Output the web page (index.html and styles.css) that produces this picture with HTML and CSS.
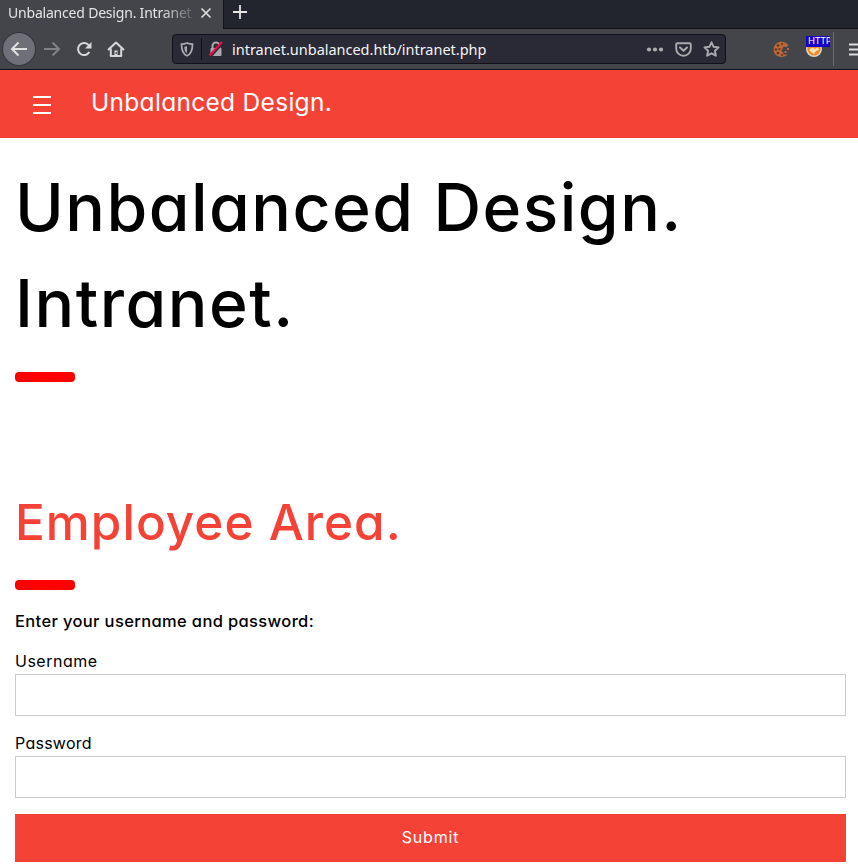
FILE: index.html
```html
<!DOCTYPE html>
<html lang="en">
<head>
<meta charset="utf-8">
<title>Unbalanced Design. Intranet</title>
<link rel="stylesheet" href="styles.css">
</head>
<body>
<div class="browser">
  <div class="tabs">
    <div class="tab">
      <span class="tab-title">Unbalanced Design. Intranet</span>
      <svg class="tab-close" width="12" height="12" viewBox="0 0 12 12"><path d="M1.5 1.5l9 9M10.5 1.5l-9 9" stroke="#dcdcdc" stroke-width="1.7"/></svg>
    </div>
    <div class="new-tab"><svg width="14" height="14" viewBox="0 0 14 14"><path d="M7 0v14M0 7h14" stroke="#e6e6e6" stroke-width="1.8"/></svg></div>
  </div>
  <div class="toolbar">
    <div class="back"><svg width="18" height="16" viewBox="0 0 18 16"><path d="M17 8H2M8.5 1.5L2 8l6.500 6.500" fill="none" stroke="#e0e0e0" stroke-width="2"/></svg></div>
    <svg class="forward" width="18" height="16" viewBox="0 0 18 16"><path d="M1 8h15M9.500 1.500L16 8l-6.500 6.500" fill="none" stroke="#818287" stroke-width="2"/></svg>
    <svg class="reload" width="16" height="16" viewBox="0 0 16 16"><path d="M13.300 11A6 6 0 1 1 12.300 3.800L14 5.500" fill="none" stroke="#d8d8da" stroke-width="2"/><path d="M15.500 1v6.500H9z" fill="#d8d8da"/></svg>
    <svg class="home" width="18" height="17" viewBox="0 0 18 17"><path d="M1 9l8-7.500L17 9M3.800 7.500V15h10.400V7.500" fill="none" stroke="#d8d8da" stroke-width="2" stroke-linejoin="round"/><path d="M7.400 15V9.500h3.200V15" fill="#d8d8da"/><path d="M8.500 11h1.300v2H8.500z" fill="#43454b"/></svg>
    <div class="urlbar">
      <svg class="shield" width="14" height="15" viewBox="0 0 14 15"><path d="M7 1C5 2 3 2.200 1.500 2.200c0 5.500.7 9.500 5.500 11.600 4.800-2.100 5.500-6.100 5.500-11.600C11 2.200 9 2 7 1z" fill="none" stroke="#a9aab0" stroke-width="1.800"/><path d="M7 4c-.9.500-1.900.6-2.700.7.100 3 .6 5.200 2.700 6.500z" fill="#a9aab0"/></svg>
      <i class="divider"></i>
      <svg class="lock" width="16" height="16" viewBox="0 0 16 16"><path d="M4.500 8V5a3.500 3.500 0 0 1 7 0v3" fill="none" stroke="#a9aab0" stroke-width="2"/><rect x="2.500" y="7" width="11" height="8" rx="1" fill="#a9aab0"/><path d="M2.500 15.500L14.800 2" stroke="#292a36" stroke-width="2.500"/><path d="M1.500 14.500L14 1" stroke="#f50c49" stroke-width="2"/></svg>
      <span class="url">intranet.unbalanced.htb/intranet.php</span>
      <svg class="dots" width="18" height="5" viewBox="0 0 18 5"><g fill="#aaabaf"><circle cx="3" cy="2.500" r="2.100"/><circle cx="9" cy="2.500" r="2.100"/><circle cx="15" cy="2.500" r="2.100"/></g></svg>
      <svg class="pocket" width="17" height="15" viewBox="0 0 17 15"><path d="M2.500 1.200h12q1.300 0 1.300 1.300v4a7.300 7.300 0 0 1-14.600 0v-4q0-1.300 1.300-1.300z" fill="none" stroke="#aaabaf" stroke-width="1.900"/><path d="M5 5.500l3.500 3.300L12 5.500" fill="none" stroke="#aaabaf" stroke-width="2" stroke-linecap="round" stroke-linejoin="round"/></svg>
      <svg class="star" width="17" height="16" viewBox="0 0 17 16"><path d="M8.500 1.300l2.100 4.500 5 .6-3.700 3.400 1 4.900-4.400-2.400-4.400 2.400 1-4.900L1.400 6.400l5-.6z" fill="none" stroke="#aaabaf" stroke-width="1.900" stroke-linejoin="round"/></svg>
    </div>
    <svg class="cookie" width="17" height="17" viewBox="0 0 17 17"><path d="M15.500 4.500C13 0 7 0 4 2 0 5-.5 10 2.500 13.500 5.500 17 12 16.500 14.500 13.500l-4 0-.5-2.500-2-1 1.500-2 1-2.500 3 .500z" fill="#b9693c"/><g fill="#633019"><circle cx="5" cy="4.500" r="1.200"/><circle cx="9" cy="3" r="1"/><circle cx="3" cy="8.500" r="1.200"/><circle cx="6.500" cy="8" r="1.100"/><circle cx="5" cy="12" r="1.300"/><circle cx="9" cy="14" r="1"/></g><path d="M14 7h2v2h-2zM11.500 10h2v2h-2z" fill="#b9693c"/></svg>
    <div class="proxy">
      <svg width="16" height="16" viewBox="0 0 16 16"><circle cx="8" cy="8" r="8" fill="#d9d2c6"/><circle cx="8" cy="8" r="6.500" fill="#ef8a22"/><path d="M3 9q3-4 6-1l3-2 1 3-3 1-2 3-3-2z" fill="#ffe0ac"/></svg>
      <span class="badge">HTTP</span>
    </div>
    <i class="separator"></i>
    <svg class="app-menu" width="9" height="13" viewBox="0 0 9 13"><path d="M0 1.500h9M0 6.500h9M0 11.500h9" stroke="#dddddf" stroke-width="2"/></svg>
  </div>
</div>
<header class="topbar">
  <svg class="burger" width="18" height="18" viewBox="0 0 18 18"><path d="M0 1h18M0 9h18M0 17h18" stroke="#fff" stroke-width="2"/></svg>
  <span class="brand">Unbalanced Design.</span>
</header>
<main>
  <h1><span class="h1-first">Unbalanced Design.</span><br><span class="h1-second">Intranet.</span></h1>
  <hr>
  <h2>Employee Area.</h2>
  <hr>
  <form>
    <p class="prompt">Enter your username and password:</p>
    <label class="user-label" for="user">Username</label>
    <input id="user" type="text">
    <label class="pass-label" for="pass">Password</label>
    <input id="pass" type="password">
    <button type="button"><span>Submit</span></button>
  </form>
</main>
</body>
</html>
```
FILE: styles.css
```css
* { box-sizing: border-box; }
body { margin: 0; background: #fff; color: #000; font: 16px/24px Inter, "Liberation Sans", sans-serif; font-feature-settings: "cv11"; overflow: hidden; }
svg, i { display: block; flex: none; }
.browser { height: 70px; background: #43454b; border-bottom: 1px solid #111218; font-family: "Noto Sans", sans-serif; }
.tabs { display: flex; height: 29px; background: #22242e; }
.tab { display: flex; align-items: center; width: 223px; height: 29px; padding: 0 11px 3px 8px; background: #43454b; }
.tab-title { width: 186px; margin-right: 6px; overflow: hidden; white-space: nowrap; color: #e4e4e4; font-size: 14px; letter-spacing: -0.2px; line-height: 22px; -webkit-mask-image: linear-gradient(90deg, #000 82%, rgba(0, 0, 0, 0.15)); mask-image: linear-gradient(90deg, #000 82%, rgba(0, 0, 0, 0.15)); }
.new-tab { display: flex; flex: 1; padding: 5px 0 0 9px; border-left: 1px solid #14151c; border-bottom: 1px solid #111218; }
.toolbar { display: flex; align-items: center; height: 40px; padding-left: 3px; }
.back { display: flex; align-items: center; justify-content: center; width: 32px; height: 32px; border-radius: 50%; background: #6f7077; box-shadow: 0 0 0 1px #34353b; }
.forward { margin-left: 8px; }
.reload { margin-left: 15px; }
.home { margin-left: 15px; }
.urlbar { display: flex; align-items: center; width: 554px; height: 30px; margin-left: 47px; padding: 0 5px 0 7px; background: #292a36; border: 1px solid #101118; border-radius: 4px; }
.divider { width: 1px; height: 22px; margin: 0 7px; background: #101118; }
.lock { margin-left: -1px; }
.url { margin-left: 8px; color: #f4f4f4; font-size: 14.5px; letter-spacing: -0.02px; white-space: nowrap; }
.dots { margin-left: auto; }
.pocket { margin-left: 11px; }
.star { margin: 0 0 0 11px; }
.cookie { margin-left: 47px; }
.proxy { position: relative; width: 24px; height: 30px; margin-left: 16px; padding: 7px 0 0 0; }
.badge { position: absolute; left: 0; top: 2px; width: 24px; height: 11px; padding-left: 2px; overflow: hidden; background: #1600c8; color: #fff; font-size: 9.500px; line-height: 10px; }
.separator { width: 1px; height: 34px; margin-left: 3px; background: #6c6d73; }
.app-menu { margin-left: 15px; }
.topbar { display: flex; align-items: center; height: 68px; padding-left: 33px; background: #f44336; color: #fff; }
.burger { margin-top: 1px; }
.brand { margin: -5px 0 0 40px; font-size: 24.5px; line-height: 36px; letter-spacing: 0.3px; white-space: nowrap; }
main { padding: 21px 12px 0 15px; }
h1, h2, p { margin: 0; font-weight: 500; white-space: nowrap; }
h1 { font-size: 66px; line-height: 96px; }
.h1-first { letter-spacing: 1.45px; }
.h1-second { letter-spacing: 1.5px; }
h2 { margin-top: 104px; color: #f44336; font-size: 49.5px; line-height: 72px; letter-spacing: 1px; }
hr { width: 60px; height: 10px; margin: 21px 0 0; border: 0; border-radius: 4px; background: red; }
h2 + hr { margin-top: 22px; }
.prompt { margin-top: 19px; font-size: 16.5px; letter-spacing: 0.36px; }
label { display: block; margin-top: 16px; }
.user-label { letter-spacing: 0.5px; }
.pass-label { margin-top: 15px; letter-spacing: 0.25px; }
input { display: block; width: 100%; height: 42px; margin-top: 1px; padding: 8px; border: 1px solid #ccc; background: #fff; font: inherit; }
button { display: block; width: 100%; height: 48px; margin-top: 16px; padding: 0 0 2px; border: 0; background: #f44336; color: #fff; font: inherit; letter-spacing: 0.8px; }
```
